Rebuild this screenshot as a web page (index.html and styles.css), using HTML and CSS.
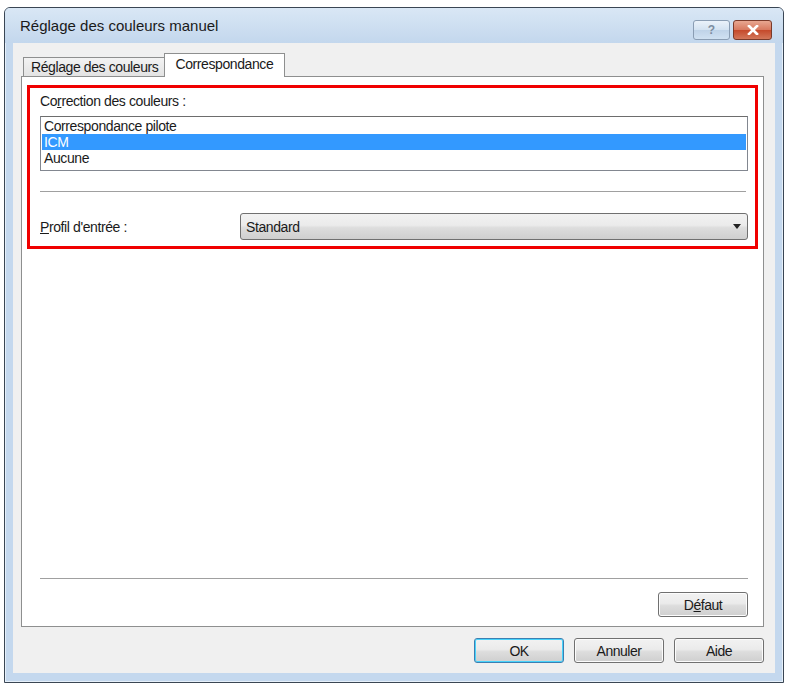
FILE: index.html
```html
<!DOCTYPE html>
<html lang="fr">
<head>
    <meta charset="UTF-8">
    <title>Réglage des couleurs manuel</title>
    <link rel="stylesheet" href="styles.css">
</head>
<body>

<!-- fenêtre de dialogue -->
<div class="window">
    <div class="titlebar">
        <span class="title">Réglage des couleurs manuel</span>
        <div class="caption-btns">
            <span class="cap-btn cap-help">?</span>
            <span class="cap-btn cap-close">
                <svg width="12" height="10" viewBox="0 0 12 10">
                    <path d="M2 1 L10 9 M10 1 L2 9" stroke="#fff" stroke-width="2.6" stroke-linecap="square"/>
                </svg>
            </span>
        </div>
    </div>

    <div class="client">
        <!-- onglets -->
        <div class="tabs">
            <div class="tab">Réglage des couleurs</div>
            <div class="tab active">Correspondance</div>
        </div>

        <div class="panel">
            <div class="highlight">
                <div class="label">Co<u>r</u>rection des couleurs :</div>
                <div class="listbox">
                    <div class="item">Correspondance pilote</div>
                    <div class="item selected">ICM</div>
                    <div class="item">Aucune</div>
                </div>
                <div class="sep"></div>
                <div class="row">
                    <div class="label row-label"><u>P</u>rofil d'entrée :</div>
                    <div class="combo">
                        <span>Standard</span>
                        <svg width="8" height="5" viewBox="0 0 8 5"><path d="M0 0 H8 L4 5 Z" fill="#222"/></svg>
                    </div>
                </div>
            </div>

            <div class="panel-bottom">
                <div class="sep"></div>
                <div class="panel-actions">
                    <button class="btn">D<u>é</u>faut</button>
                </div>
            </div>
        </div>

        <div class="actions">
            <button class="btn btn-default">OK</button>
            <button class="btn">Annuler</button>
            <button class="btn">Aide</button>
        </div>
    </div>
</div>

</body>
</html>
```

FILE: styles.css
```css
*{margin:0;padding:0;box-sizing:border-box}
body{background:#fff;font-family:"Liberation Sans",Arial,sans-serif;font-size:14px;color:#1a1a1a}
u{text-decoration:underline;text-underline-offset:1px}

.window{
    margin:7px 0 0 4px;
    width:780px;
    height:676px;
    border:1px solid #3a4654;
    border-radius:6px 6px 0 0;
    background:#c4d8ee;
    display:flex;
    flex-direction:column;
    box-shadow:inset 0 0 0 1px #e6f0fa;
}

.titlebar{
    height:35px;
    display:flex;
    align-items:center;
    padding:0 11px 0 15px;
    background:linear-gradient(#d9e7f5,#c3d7ed);
    border-radius:5px 5px 0 0;
}
.title{font-size:15px;color:#1a1a1a}
.caption-btns{margin-left:auto;display:flex;gap:3px;align-self:flex-start;margin-top:12px}
.cap-btn{
    height:20px;
    border:1px solid #6d7f95;
    border-radius:3px;
    display:flex;
    align-items:center;
    justify-content:center;
}
.cap-help{
    width:37px;
    border-color:#8a9db3;
    background:linear-gradient(#eaf2fa 0%,#d3e2f1 50%,#bfd3e8 51%,#d0e1f2 100%);
    color:#7d8da0;
    font-weight:bold;
    font-size:12px;
}
.cap-close{
    width:39px;
    border-color:#7a3a2a;
    background:linear-gradient(#e8a791 0%,#d7785e 50%,#c5492b 51%,#d3775a 100%);
}

.client{
    flex:1;
    margin:0 8px 9px 8px;
    background:#f0f0f0;
    padding:10px 11px 0 8px;
    display:flex;
    flex-direction:column;
}

/* onglets */
.tabs{display:flex;padding-left:2px;align-items:flex-end;height:23px;position:relative;z-index:1}
.tab{
    height:19px;
    padding:0 6px 0 7px;
    border:1px solid #8e8f8f;
    border-bottom:none;
    background:linear-gradient(#f3f3f3,#e3e3e3);
    line-height:18px;
    letter-spacing:-0.4px;
}
.tab.active{
    height:24px;
    margin-left:-1px;
    margin-bottom:-1px;
    background:#fff;
    padding:0 11px 0 10px;
    line-height:20px;
}

.panel{
    flex:1;
    background:#fff;
    border:1px solid #8e8f8f;
    padding:8px 5px 9px 5px;
    display:flex;
    flex-direction:column;
}

.highlight{
    border:3px solid #f00000;
    padding:5px 7px 6px 10px;
}
.label{letter-spacing:-0.4px;line-height:16px}
.listbox{
    margin-top:7px;
    border:1px solid #828790;
    border-top-color:#6d6d6d;
    padding:1px 1px 2px 1px;
    height:55px;
}
.item{height:16px;line-height:16px;padding-left:2px;letter-spacing:-0.4px}
.item.selected{background:#3399ff;color:#fff}

.sep{height:2px;border-top:1px solid #a0a0a0;border-bottom:1px solid #fff;margin:20px 2px 0 0}

.row{display:flex;align-items:center;margin-top:20px}
.row-label{width:200px}
.combo{
    flex:1;
    height:27px;
    border:1px solid #707070;
    border-radius:3px;
    background:linear-gradient(#f2f2f2 0%,#ebebeb 45%,#dddddd 55%,#cfcfcf 100%);
    display:flex;
    align-items:center;
    padding:0 6px 0 5px;
    letter-spacing:-0.4px;
}
.combo svg{margin-left:auto}

.panel-bottom{margin-top:auto;padding:0 10px 0 13px}
.panel-bottom .sep{margin:0}
.panel-actions{display:flex;justify-content:flex-end;margin-top:12px}

.btn{
    width:90px;
    height:25px;
    border:1px solid #707070;
    border-radius:3px;
    background:linear-gradient(#f2f2f2 0%,#ebebeb 45%,#dddddd 55%,#cfcfcf 100%);
    font-family:"Liberation Sans",Arial,sans-serif;
    font-size:14px;
    color:#1a1a1a;
    letter-spacing:-0.5px;
    box-shadow:inset 0 0 0 1px #fcfcfc;
}
.btn-default{border-color:#3c7fb1;box-shadow:inset 0 0 0 1px #48d3fb}

.actions{display:flex;justify-content:flex-end;gap:10px;margin-top:11px;padding-bottom:10px}
```
